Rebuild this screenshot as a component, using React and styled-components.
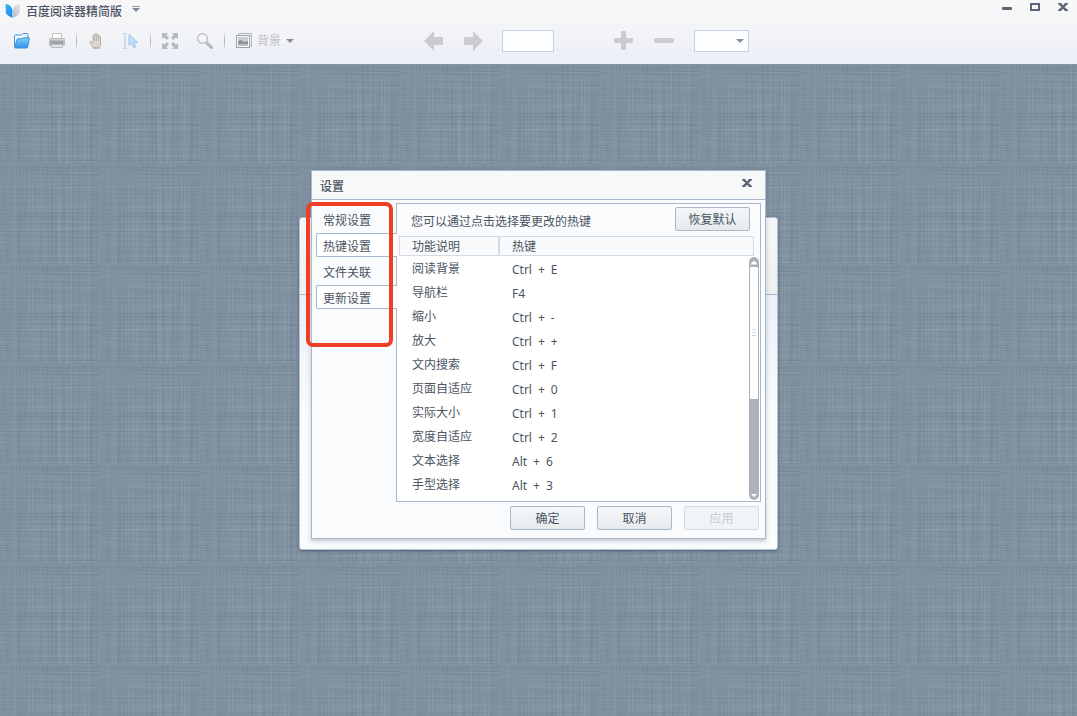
import React from "react";
import styled, { createGlobalStyle } from "styled-components";

const App = () => {
  return (
    <Window>
      <GlobalStyle />
      <Chrome>
        <TitleBar>
          <Logo />
          <AppTitle>百度阅读器精简版</AppTitle>
          <MenuButton aria-label="menu">
            <svg width="8" height="6" viewBox="0 0 8 6">
              <path d="M0 .5h8" stroke="#8a9bab" />
              <path d="M0 2h8L4 6z" fill="#7d8e9f" />
            </svg>
          </MenuButton>
          <WindowButtons>
            <PlainButton aria-label="minimize">
              <svg width="10" height="9" viewBox="0 0 10 9">
                <rect y="4" width="10" height="3" rx="1" fill="#5c6577" />
              </svg>
            </PlainButton>
            <PlainButton aria-label="maximize">
              <svg width="10" height="9" viewBox="0 0 10 9">
                <path
                  d="M1 1h8v6H1z"
                  fill="none"
                  stroke="#5c6577"
                  strokeWidth="2"
                />
              </svg>
            </PlainButton>
            <PlainButton aria-label="close">
              <CloseIcon />
            </PlainButton>
          </WindowButtons>
        </TitleBar>
        <Toolbar>
          <ToolGroup>
            <PlainButton aria-label="open">
              <FolderIcon />
            </PlainButton>
            <PlainButton aria-label="print">
              <PrinterIcon />
            </PlainButton>
          </ToolGroup>
          <Separator />
          <ToolGroup>
            <PlainButton aria-label="hand">
              <HandIcon />
            </PlainButton>
            <PlainButton aria-label="select text">
              <SelectIcon />
            </PlainButton>
          </ToolGroup>
          <Separator />
          <ToolGroup>
            <PlainButton aria-label="full screen">
              <ExpandIcon />
            </PlainButton>
            <PlainButton aria-label="search">
              <SearchIcon />
            </PlainButton>
          </ToolGroup>
          <Separator />
          <BackgroundButton>
            <PictureIcon />
            背景
            <Caret color="#8f8f94" />
          </BackgroundButton>
          <Navigation>
            <PlainButton aria-label="previous page">
              <ArrowIcon />
            </PlainButton>
            <PlainButton aria-label="next page">
              <ArrowIcon flip />
            </PlainButton>
            <PageInput aria-label="page" />
          </Navigation>
          <Zoom>
            <PlainButton aria-label="zoom in">
              <svg width="20" height="20" viewBox="0 0 20 20" fill="#cbccce">
                <rect y="7" width="19" height="5" rx="1" />
                <rect x="7" width="5" height="19" rx="1" />
              </svg>
            </PlainButton>
            <PlainButton aria-label="zoom out">
              <svg width="20" height="20" viewBox="0 0 20 20" fill="#cbccce">
                <rect y="7" width="20" height="5" rx="2" />
              </svg>
            </PlainButton>
            <SelectBox>
              <ZoomSelect aria-label="zoom" defaultValue="">
                <option value=""></option>
              </ZoomSelect>
              <Caret color="#8f8f94" />
            </SelectBox>
          </Zoom>
        </Toolbar>
      </Chrome>
      <Desktop>
        <Fabric />
        <BackPanel>
          <BackPanelTop />
          <Dialog role="dialog" aria-label="设置">
            <DialogHeader>
              <DialogTitle>设置</DialogTitle>
              <PlainButton aria-label="close">
                <CloseIcon />
              </PlainButton>
            </DialogHeader>
            <DialogBody>
              <Tabs>
                {tabs.map(t => (
                  <Tab key={t.label} $raised={t.raised}>
                    {t.label}
                  </Tab>
                ))}
              </Tabs>
              <Panel>
                <PanelTop>
                  <Hint>您可以通过点击选择要更改的热键</Hint>
                  <Button>恢复默认</Button>
                </PanelTop>
                <ListArea>
                  <HotkeyTable>
                    <thead>
                      <tr>
                        <HeadCell $name>功能说明</HeadCell>
                        <HeadCell>热键</HeadCell>
                      </tr>
                    </thead>
                    <tbody>
                      {hotkeys.map(([name, keys]) => (
                        <tr key={name}>
                          <NameCell>{name}</NameCell>
                          <KeyCell>
                            <Keys>
                              {keys.split(" ").map((k, i) => (
                                <span key={i}>{k}</span>
                              ))}
                            </Keys>
                          </KeyCell>
                        </tr>
                      ))}
                    </tbody>
                  </HotkeyTable>
                  <Scrollbar>
                    <ScrollButton aria-label="scroll up">
                      <svg width="8" height="5" viewBox="0 0 8 5">
                        <path d="M1 4h6L4 1z" fill="#fff" stroke="#fff" />
                      </svg>
                    </ScrollButton>
                    <Thumb>
                      <Grip />
                      <Grip />
                      <Grip />
                    </Thumb>
                    <ScrollButton aria-label="scroll down">
                      <svg width="8" height="5" viewBox="0 0 8 5">
                        <path d="M1 1h6L4 4z" fill="#fff" />
                      </svg>
                    </ScrollButton>
                  </Scrollbar>
                </ListArea>
              </Panel>
            </DialogBody>
            <DialogFooter>
              <Button>确定</Button>
              <Button>取消</Button>
              <Button disabled>应用</Button>
            </DialogFooter>
            <Highlight />
          </Dialog>
        </BackPanel>
      </Desktop>
    </Window>
  );
};
export default App;

const tabs = [
  { label: "常规设置", raised: false },
  { label: "热键设置", raised: true },
  { label: "文件关联", raised: false },
  { label: "更新设置", raised: true }
];

const hotkeys = [
  ["阅读背景", "Ctrl + E"],
  ["导航栏", "F4"],
  ["缩小", "Ctrl + -"],
  ["放大", "Ctrl + +"],
  ["文内搜索", "Ctrl + F"],
  ["页面自适应", "Ctrl + 0"],
  ["实际大小", "Ctrl + 1"],
  ["宽度自适应", "Ctrl + 2"],
  ["文本选择", "Alt + 6"],
  ["手型选择", "Alt + 3"]
];

const Logo = () => (
  <svg width="16" height="16" viewBox="0 0 16 16">
    <defs>
      <linearGradient id="logoBlue" x1="0" y1="0" x2="1" y2="1">
        <stop offset="0" stopColor="#3db4f8" />
        <stop offset="1" stopColor="#1684e2" />
      </linearGradient>
      <linearGradient id="logoGrey" x1="1" y1="0" x2="0" y2="1">
        <stop offset="0" stopColor="#e3e7ea" />
        <stop offset="1" stopColor="#b3bdc7" />
      </linearGradient>
    </defs>
    <path
      d="M.5 1C4 1.100 6.800 3.500 7.400 7v8C5.500 13.500 2 12.500 .8 10z"
      fill="url(#logoBlue)"
    />
    <path
      d="M15 1C11.500 1.100 8.600 3.500 8 7v8c2-1.500 5.500-2.500 6.700-5z"
      fill="url(#logoGrey)"
    />
  </svg>
);

const CloseIcon = () => (
  <svg width="10" height="9" viewBox="0 0 10 9">
    <path
      d="M0 0h3l2 2.500L7 0h3v1L6.500 4 10 7v1H7L5 5.800 3 8H0V7l3.500-3L0 1z"
      fill="#5c6577"
    />
  </svg>
);

const Caret = ({ color }) => (
  <svg width="8" height="4" viewBox="0 0 8 4">
    <path d="M0 0h8L4 4z" fill={color} />
  </svg>
);

const FolderIcon = () => (
  <svg width="16" height="16" viewBox="0 0 16 16">
    <defs>
      <linearGradient id="folder" x1="0" y1="0" x2="0" y2="1">
        <stop offset="0" stopColor="#86cefc" />
        <stop offset="1" stopColor="#2a93ea" />
      </linearGradient>
    </defs>
    <path
      d="M.5 14V3q0-1 1-1H7.500L9 .5h4q.8 0 .8.8V7"
      fill="#eef7fe"
      stroke="#4b93d0"
    />
    <path
      d="M.8 14.800L2.800 6.500q.2-.7 1-.7H8l1.200-1h5.800q.6 0 .4.700L13.600 14.300q-.2.700-1 .7H1.300q-.5 0-.5-.2z"
      fill="url(#folder)"
      stroke="#3b93dc"
    />
  </svg>
);

const PrinterIcon = () => (
  <svg width="16" height="16" viewBox="0 0 16 16">
    <path d="M3.500 7V.5h9V7" fill="#fbfbfb" stroke="#c3c5c7" />
    <rect y="5" width="16" height="8" rx="1.500" fill="#b9bbbe" />
    <path d="M1 6.500h14" stroke="#d4d6d8" />
    <path d="M2 9.500h12" stroke="#949b9f" strokeWidth="2" />
    <path d="M2.500 11.500h11v3h-11z" fill="#f1f2f2" stroke="#b5b9bc" />
    <path d="M4 13h8" stroke="#cde0d9" />
  </svg>
);

const HandIcon = () => (
  <svg width="16" height="16" viewBox="0 0 16 16">
    <path
      d="M5 14.500C4 12.500 2 10.800 2 9.200c0-1 1.200-1.200 2 0l1 1V3c0-1.300 1.700-1.300 1.800 0V1.500c0-1.300 1.900-1.300 1.900 0V2.300c0-1.300 1.800-1.300 1.900 0V4c.2-1.200 1.900-1.100 1.900.1V11c0 1.500-.7 2.500-1 3.500z"
      fill="#dcd6d1"
      stroke="#b7b0aa"
    />
    <path d="M6.800 3v5M8.700 2.500V8M10.600 3.500V8" stroke="#bdb6b0" />
    <path d="M5 15.500h6.500" stroke="#c3bcb6" />
  </svg>
);

const SelectIcon = () => (
  <svg width="16" height="16" viewBox="0 0 16 16">
    <path
      d="M0 .5h1.500M2.500 .5H4M0 15.500h1.500M2.500 15.500H4M2 1v14"
      stroke="#a9c8e2"
      fill="none"
    />
    <path
      d="M6 1.500v11l2.700-2.300 1.900 4.600 2.200-1-1.900-4.300h3.900z"
      fill="#c3defa"
      stroke="#a3c6e8"
    />
  </svg>
);

const ExpandIcon = () => (
  <svg width="16" height="16" viewBox="0 0 16 16">
    {[0, 90, 180, 270].map(angle => (
      <path
        key={angle}
        transform={`rotate(${angle} 8 8)`}
        d="M0 0h6L4.300 2 7 4.700 4.700 7 2 4.300 0 6z"
        fill="#b3bac1"
      />
    ))}
  </svg>
);

const SearchIcon = () => (
  <svg width="16" height="16" viewBox="0 0 16 16">
    <path
      d="M9.500 9.500l5 5"
      stroke="#a9aeb3"
      strokeWidth="3"
      strokeLinecap="round"
    />
    <path d="M9.500 9l5 5" stroke="#cdd1d4" strokeLinecap="round" />
    <circle
      cx="5.500"
      cy="5.500"
      r="4.800"
      fill="#f3f5f6"
      stroke="#c0c3c6"
      strokeWidth="1.400"
    />
    <path d="M3 5q.5-2 2.500-2.300" fill="none" stroke="#fff" />
  </svg>
);

const PictureIcon = () => (
  <svg width="16" height="16" viewBox="0 0 16 16">
    <path d="M2.500 2V.5h13v13H14" fill="#eceeef" stroke="#b5babe" />
    <rect
      x=".5"
      y="2.500"
      width="13"
      height="12"
      fill="#f7f8f8"
      stroke="#a0a5a9"
    />
    <path d="M2 4h10v9H2z" fill="#c9ced2" />
    <path d="M2 8l3-1 3 2 4-1v5H2z" fill="#8d9696" />
    <path d="M2 11h10v2H2z" fill="#b9c3b8" />
  </svg>
);

const ArrowIcon = ({ flip }) => (
  <svg width="20" height="20" viewBox="0 0 20 20">
    <path
      transform={flip ? "rotate(180 10 10)" : undefined}
      d="M0 10L10 0v6h8q1 0 1 1v6q0 1-1 1h-8v6z"
      fill="#cbccce"
    />
  </svg>
);

// woven cloth tile: noise stretched along each axis, blended half and half
const Fabric = () => (
  <FabricSvg aria-hidden="true">
    <defs>
      <filter
        id="weft"
        x="0"
        y="0"
        width="100%"
        height="100%"
        colorInterpolationFilters="sRGB"
      >
        <feTurbulence
          type="fractalNoise"
          baseFrequency="0.008 0.8"
          numOctaves="2"
          seed="4"
        />
        <feColorMatrix values=".22 0 0 0 .393  .22 0 0 0 .458  .22 0 0 0 .52  0 0 0 0 1" />
      </filter>
      <filter
        id="warp"
        x="0"
        y="0"
        width="100%"
        height="100%"
        colorInterpolationFilters="sRGB"
      >
        <feTurbulence
          type="fractalNoise"
          baseFrequency="0.8 0.008"
          numOctaves="2"
          seed="9"
        />
        <feColorMatrix values=".22 0 0 0 .393  .22 0 0 0 .458  .22 0 0 0 .52  0 0 0 0 1" />
      </filter>
      <pattern
        id="cloth"
        width="100"
        height="100"
        patternUnits="userSpaceOnUse"
      >
        <rect width="100" height="100" filter="url(#weft)" />
        <rect width="100" height="100" filter="url(#warp)" opacity=".5" />
      </pattern>
    </defs>
    <rect width="100%" height="100%" fill="url(#cloth)" />
  </FabricSvg>
);

const GlobalStyle = createGlobalStyle`
  * {
    box-sizing: border-box;
  }
  body {
    margin: 0;
    font-family: "Noto Sans", "Noto Sans CJK SC", sans-serif;
    font-size: 12px;
    line-height: 16px;
    color: #4a5462;
  }
  button,
  input,
  select {
    font: inherit;
    color: inherit;
  }
  svg {
    display: block;
  }
`;

const Window = styled.div`
  display: flex;
  flex-direction: column;
  min-height: 100vh;
`;

const Chrome = styled.header`
  height: 64px;
  background: linear-gradient(#f8f8f8, #f3f4f7 50%, #eaeef7);
`;

const TitleBar = styled.div`
  display: flex;
  align-items: flex-start;
  height: 24px;
  padding: 3px 9px 0 5px;
`;

const AppTitle = styled.h1`
  margin: 1px 10px 0 5px;
  font-size: 12px;
  line-height: 16px;
  font-weight: 500;
`;

const PlainButton = styled.button`
  padding: 0;
  border: 0;
  background: none;
`;

const MenuButton = styled(PlainButton)`
  padding-top: 3px;
`;

const WindowButtons = styled.div`
  display: flex;
  gap: 18px;
  margin-left: auto;
`;

const Toolbar = styled.div`
  display: flex;
  align-items: center;
  height: 34px;
  padding-left: 14px;
`;

const ToolGroup = styled.div`
  display: flex;
  gap: 19px;
`;

const Separator = styled.span`
  width: 1px;
  height: 16px;
  margin: 0 11px;
  background: linear-gradient(#e3e6ea, #a9b0b8, #e3e6ea);
`;

const BackgroundButton = styled(PlainButton)`
  display: flex;
  align-items: center;
  gap: 5px;
  color: #c3c3c5;
`;

const Navigation = styled.div`
  display: flex;
  align-items: center;
  gap: 19px;
  margin-left: 130px;
`;

const PageInput = styled.input`
  width: 52px;
  height: 22px;
  border: 1px solid #c5d0e3;
  background: #fcfdff;
`;

const Zoom = styled.div`
  display: flex;
  align-items: center;
  gap: 20px;
  margin-left: 60px;
`;

const SelectBox = styled.label`
  display: flex;
  align-items: center;
  width: 55px;
  height: 22px;
  padding-right: 4px;
  border: 1px solid #c5d0e3;
  background: #fcfdff;
`;

const ZoomSelect = styled.select`
  flex: 1;
  min-width: 0;
  height: 20px;
  border: 0;
  appearance: none;
  background: none;
`;

const Desktop = styled.main`
  position: relative;
  flex: 1;
  display: flex;
  align-items: center;
  justify-content: center;
  padding-bottom: 14px;
  background: #7f909f;
`;

const FabricSvg = styled.svg`
  position: absolute;
  inset: 0;
  width: 100%;
  height: 100%;
`;

const BackPanel = styled.section`
  position: relative;
  width: 479px;
  height: 333px;
  border: 1px solid #b4c1d0;
  border-radius: 3px;
  background: linear-gradient(#e4e9f1, #f9fbfd 60%);
  box-shadow: 0 1px 3px rgba(40, 55, 75, 0.5);
`;

const BackPanelTop = styled.div`
  height: 77px;
  border-bottom: 1px solid #a9b9cc;
  border-radius: 3px 3px 0 0;
  background: linear-gradient(#f7f7f7, #efefef);
`;

const Dialog = styled.div`
  position: absolute;
  top: -48px;
  left: 11px;
  width: 455px;
  border: 1px solid #a9b9cc;
  background: #f9fbfd;
  box-shadow: 0 2px 4px rgba(60, 75, 95, 0.3);
`;

const DialogHeader = styled.div`
  display: flex;
  align-items: center;
  justify-content: space-between;
  height: 29px;
  padding: 0 13px 2px 8px;
  border-bottom: 1px solid #a9b9cc;
  background: #f7f8f8;
`;

const DialogTitle = styled.h2`
  margin: 6px 0 0;
  font-size: 12px;
  line-height: 16px;
  font-weight: 500;
`;

const DialogBody = styled.div`
  display: flex;
  padding: 3px 4px 0;
`;

const Tabs = styled.nav`
  display: flex;
  flex-direction: column;
  gap: 2px;
  width: 81px;
  margin-right: -1px;
  padding-top: 4px;
  z-index: 1;
`;

const Tab = styled.button`
  height: 24px;
  padding: 4px 0 0 6px;
  border: 1px solid ${p => (p.$raised ? "#a9b9cc" : "transparent")};
  border-right: 0;
  border-radius: 2px 0 0 2px;
  background: ${p => (p.$raised ? "#fff" : "none")};
  text-align: left;
`;

const Panel = styled.div`
  flex: 1;
  border: 1px solid #a9b9cc;
  background: linear-gradient(#fafcfd 51px, #fff 51px);
`;

const PanelTop = styled.div`
  display: flex;
  align-items: center;
  justify-content: space-between;
  padding: 3px 10px 5px 14px;
`;

const Hint = styled.p`
  margin: 6px 0 0;
`;

const Button = styled.button`
  width: 75px;
  height: 24px;
  padding: 2px 0 0;
  border: 1px solid #a9b9cc;
  border-radius: 2px;
  background: linear-gradient(#f5f7f8, #e6eaed);

  &:disabled {
    border-color: #d3dbe5;
    background: #f1f4f6;
    color: #c6cacf;
  }
`;

const ListArea = styled.div`
  display: flex;
  height: 265px;
  padding: 0 1px 0 2px;
`;

const HotkeyTable = styled.table`
  flex: 1;
  align-self: flex-start;
  border-collapse: separate;
  border-spacing: 0;
  table-layout: fixed;
`;

const HeadCell = styled.th`
  width: ${p => (p.$name ? "101px" : "auto")};
  height: 20px;
  padding: 2px 0 0 12px;
  border: 1px solid #d5dae6;
  border-width: ${p => (p.$name ? "1px 2px 1px 1px" : "1px 1px 1px 0")};
  background: #f8fafb;
  font-weight: 400;
  text-align: left;
`;

const NameCell = styled.td`
  height: 24px;
  padding: 2px 0 0 13px;
`;

const KeyCell = styled.td`
  padding: 4px 0 0 12px;
`;

const Keys = styled.div`
  display: flex;
  gap: 6px;
`;

const Scrollbar = styled.div`
  display: flex;
  flex-direction: column;
  width: 10px;
  margin: 21px 0 1px -5px;
  border-radius: 5px;
  background: #abb2bb;
`;

const ScrollButton = styled(PlainButton)`
  display: flex;
  justify-content: center;
  height: 10px;
  padding-top: 3px;

  &:last-child {
    height: 8px;
    margin-top: auto;
    padding-top: 1px;
  }
`;

const Thumb = styled.div`
  display: flex;
  flex-direction: column;
  align-items: center;
  justify-content: center;
  gap: 2px;
  height: 132px;
  margin: 0 1px;
  border-radius: 1px;
  background: #fff;
`;

const Grip = styled.span`
  width: 4px;
  height: 1px;
  background: #d5dae2;
`;

const DialogFooter = styled.div`
  display: flex;
  justify-content: flex-end;
  gap: 12px;
  padding: 4px 6px 8px;
`;

// red frame drawn over the tab column
const Highlight = styled.div`
  position: absolute;
  top: 31px;
  left: -6px;
  width: 87px;
  height: 145px;
  border: 4px solid #ee3e25;
  border-radius: 7px;
  pointer-events: none;
  z-index: 2;
`;
